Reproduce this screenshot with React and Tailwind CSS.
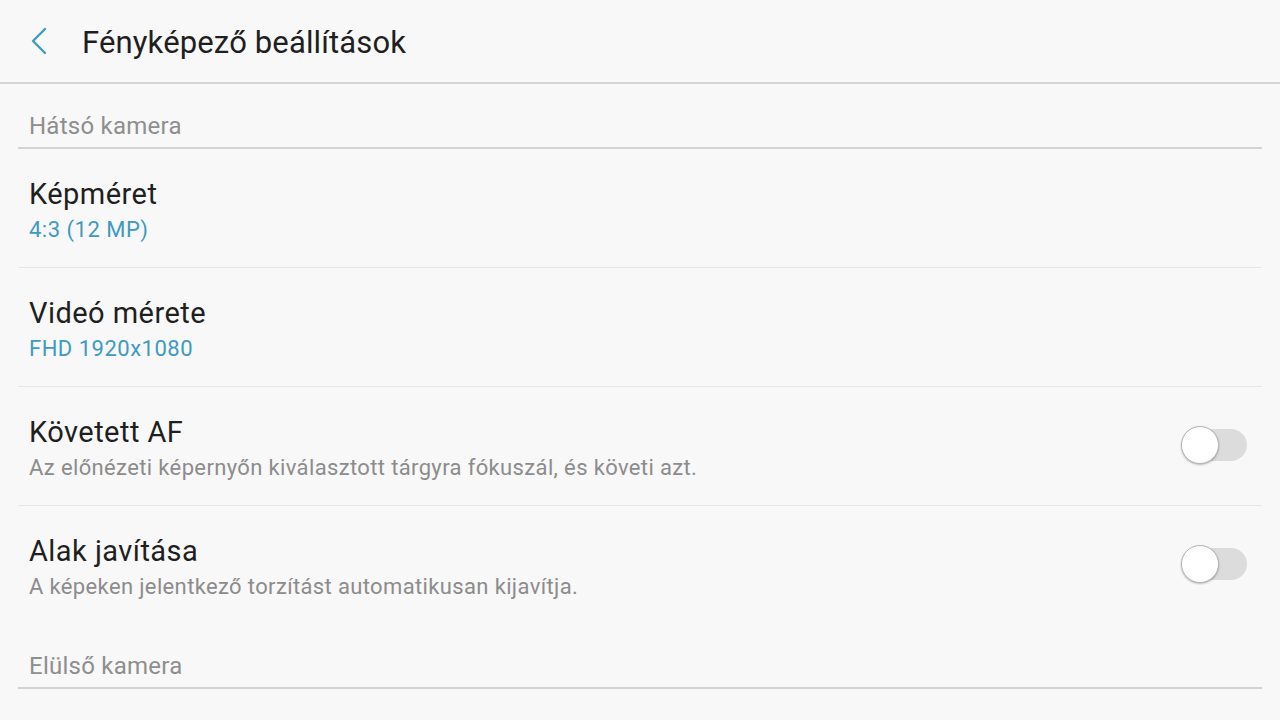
import React from "react";

function Toggle() {
  return (
    <div className="relative w-[66px] h-[40px] shrink-0">
      <div className="absolute left-[6px] right-0 top-[3px] h-[32px] rounded-full bg-[#dcdcdc]" />
      <div className="absolute left-0 top-0 w-[38px] h-[38px] rounded-full bg-white border border-[#b5b5b5] shadow-[0_1px_2px_rgba(0,0,0,0.25)]" />
    </div>
  );
}

function Row({ title, sub, subBlue, toggle, last }) {
  return (
    <div
      className={
        "mx-[18px] pl-[11px] pr-[15px] h-[119px] flex items-start " +
        (last ? "" : "border-b border-[#e6e6e6]")
      }
    >
      <div className="flex-1 pt-[27px]">
        <div className="text-[29px] leading-[36px] tracking-[0.45px] text-[#1f1f1f]">{title}</div>
        <div
          className={
            subBlue
              ? "text-[22px] leading-[36px] tracking-[0.5px] text-[#3d9bc3]"
              : "text-[22px] leading-[36px] tracking-[0.36px] text-[#8c8c8c]"
          }
        >
          {sub}
        </div>
      </div>
      {toggle && (
        <div className="pt-[39px]">
          <Toggle />
        </div>
      )}
    </div>
  );
}

function Section({ label, pt }) {
  return (
    <div className={"mx-[18px] pl-[11px] pb-[6px] border-b-2 border-[#d3d3d3] " + pt}>
      <div className="text-[24px] leading-[30px] tracking-[0.25px] text-[#8e8e8e]">{label}</div>
    </div>
  );
}

export default function App() {
  return (
    <div
      className="w-[1280px] h-[720px] overflow-hidden bg-[#f8f8f8]"
      style={{ fontFamily: "Roboto, 'Noto Sans', sans-serif" }}
    >
      <div className="h-[84px] border-b-2 border-[#d6d6d6] flex items-center">
        <div className="w-[82px] flex items-center pl-[30px]">
          <svg width="18" height="28" viewBox="0 0 18 28" fill="none">
            <path d="M15 2 L3 14 L15 26" stroke="#3f9bc2" strokeWidth="2.4" strokeLinecap="round" strokeLinejoin="round" />
          </svg>
        </div>
        <div className="text-[31px] leading-[36px] tracking-[0.14px] text-[#1f1f1f] pt-[4px]">Fényképező beállítások</div>
      </div>

      <Section label="Hátsó kamera" pt="pt-[27px]" />
      <Row title="Képméret" sub="4:3 (12 MP)" subBlue />
      <Row title="Videó mérete" sub="FHD 1920x1080" subBlue />
      <Row
        title="Követett AF"
        sub="Az előnézeti képernyőn kiválasztott tárgyra fókuszál, és követi azt."
        toggle
      />
      <Row
        title="Alak javítása"
        sub="A képeken jelentkező torzítást automatikusan kijavítja."
        toggle
        last
      />
      <Section label="Elülső kamera" pt="pt-[26px]" />
    </div>
  );
}
